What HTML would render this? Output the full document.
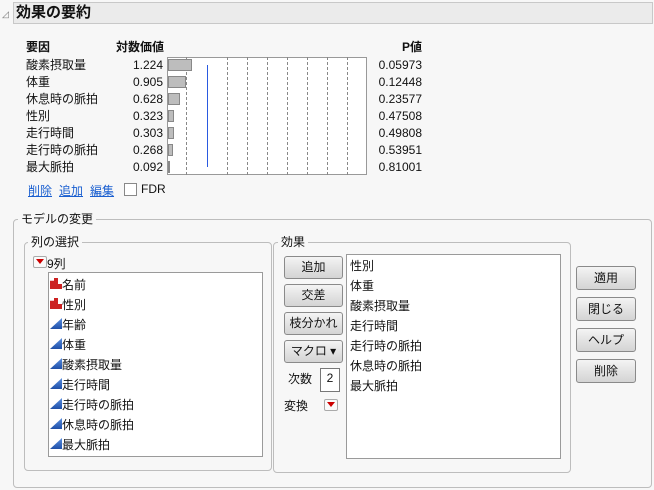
<!DOCTYPE html>
<html><head><meta charset="utf-8"><style>
body{margin:0;width:654px;height:490px;background:#f7f7f7;font-family:"Liberation Sans","Noto Sans CJK JP",sans-serif;font-size:12px;color:#111;position:relative;overflow:hidden}
.a{position:absolute;white-space:nowrap}
.r{text-align:right}
.btn{position:absolute;border:1px solid #8a8a8a;border-radius:3px;background:linear-gradient(#f4f4f4,#e0e0e0 60%,#d4d4d4);text-align:center;font-size:12px;box-sizing:border-box}
.grp{position:absolute;border:1px solid #bdbdbd;border-radius:4px}
.lbl{position:absolute;background:#f7f7f7;padding:0 3px;line-height:14px}
.list{position:absolute;background:#fff;border:1px solid #9a9a9a}
.dash{position:absolute;top:57px;height:118px;border-left:1px dashed #888}
.bar{position:absolute;left:168px;height:12px;background:#bdbdbd;border:1px solid #888;box-sizing:border-box}
.tri{position:absolute;width:12px;height:10px;border:1px solid #aaa;border-radius:2px;background:#fafafa}
.tri:after{content:"";position:absolute;left:2px;top:2px;border-left:4px solid transparent;border-right:4px solid transparent;border-top:5px solid #c00}
.n{display:inline-block;width:12px;height:11px;background:#c22;clip-path:polygon(0 25%,4px 25%,4px 0,8px 0,8px 55%,100% 55%,100% 100%,0 100%)}
.c{display:inline-block;width:12px;height:11px;background:linear-gradient(#5a8fe0,#1f4fa8);clip-path:polygon(100% 0,100% 100%,0 100%)}
</style></head><body>
<div class="a" style="left:2px;top:9px;font-size:9px;color:#777">◿</div>
<div class="a" style="left:13px;top:2px;width:640px;height:22px;background:#ebebeb;border:1px solid #c8c8c8;box-sizing:border-box"></div>
<div class="a" style="left:16px;top:4px;font-size:15px;font-weight:bold;line-height:18px">効果の要約</div>

<div class="a" style="left:26px;top:38px;font-weight:bold">要因</div>
<div class="a" style="left:116px;top:38px;font-weight:bold">対数価値</div>
<div class="a r" style="left:380px;width:42px;top:38px;font-weight:bold">P値</div>

<div class="a" style="left:167px;top:57px;width:200px;height:118px;border:1px solid #999;box-sizing:border-box;background:#fff"></div>
<div class="dash" style="left:186px"></div><div class="dash" style="left:227px"></div><div class="dash" style="left:247px"></div><div class="dash" style="left:267px"></div><div class="dash" style="left:287px"></div><div class="dash" style="left:307px"></div><div class="dash" style="left:327px"></div><div class="dash" style="left:347px"></div>
<div class="a" style="left:207px;top:65px;width:1px;height:102px;background:#2a5ae0"></div>
<div class="bar" style="top:59px;width:24px"></div>
<div class="bar" style="top:76px;width:18px"></div>
<div class="bar" style="top:93px;width:12px"></div>
<div class="bar" style="top:110px;width:6px"></div>
<div class="bar" style="top:127px;width:6px"></div>
<div class="bar" style="top:144px;width:5px"></div>
<div class="bar" style="top:161px;width:2px"></div>

<div style="position:absolute;left:26px;top:57px;line-height:17px">酸素摂取量<br>体重<br>休息時の脈拍<br>性別<br>走行時間<br>走行時の脈拍<br>最大脈拍</div>
<div class="r" style="position:absolute;left:100px;width:63px;top:57px;line-height:17px">1.224<br>0.905<br>0.628<br>0.323<br>0.303<br>0.268<br>0.092</div>
<div class="r" style="position:absolute;left:360px;width:62px;top:57px;line-height:17px">0.05973<br>0.12448<br>0.23577<br>0.47508<br>0.49808<br>0.53951<br>0.81001</div>

<div class="a" style="left:28px;top:182px;color:#1a5fd0;text-decoration:underline">削除</div>
<div class="a" style="left:59px;top:182px;color:#1a5fd0;text-decoration:underline">追加</div>
<div class="a" style="left:90px;top:182px;color:#1a5fd0;text-decoration:underline">編集</div>
<div class="a" style="left:124px;top:183px;width:11px;height:11px;border:1px solid #888;background:#fff"></div>
<div class="a" style="left:141px;top:182px">FDR</div>

<div class="grp" style="left:13px;top:219px;width:637px;height:267px"></div>
<div class="lbl" style="left:18px;top:212px">モデルの変更</div>
<div class="grp" style="left:24px;top:242px;width:246px;height:227px"></div>
<div class="lbl" style="left:28px;top:235px">列の選択</div>
<div class="tri" style="left:33px;top:256px"></div>
<div class="a" style="left:47px;top:255px">9列</div>
<div class="list" style="left:48px;top:272px;width:213px;height:183px"></div>
<div style="position:absolute;left:50px;top:275px;line-height:20px">
<div><span class="n"></span>名前</div>
<div><span class="n"></span>性別</div>
<div><span class="c"></span>年齢</div>
<div><span class="c"></span>体重</div>
<div><span class="c"></span>酸素摂取量</div>
<div><span class="c"></span>走行時間</div>
<div><span class="c"></span>走行時の脈拍</div>
<div><span class="c"></span>休息時の脈拍</div>
<div><span class="c"></span>最大脈拍</div>
</div>

<div class="grp" style="left:273px;top:242px;width:296px;height:229px"></div>
<div class="lbl" style="left:278px;top:235px">効果</div>
<div class="btn" style="left:284px;top:256px;width:59px;height:23px;line-height:21px">追加</div>
<div class="btn" style="left:284px;top:284px;width:59px;height:23px;line-height:21px">交差</div>
<div class="btn" style="left:284px;top:312px;width:59px;height:23px;line-height:21px">枝分かれ</div>
<div class="btn" style="left:284px;top:340px;width:59px;height:23px;line-height:21px">マクロ ▾</div>
<div class="a" style="left:288px;top:370px">次数</div>
<div class="a" style="left:320px;top:368px;width:20px;height:24px;background:#fff;border:1px solid #777;box-sizing:border-box;text-align:center;line-height:18px">2</div>
<div class="a" style="left:284px;top:397px">変換</div>
<div class="tri" style="left:324px;top:399px"></div>
<div class="list" style="left:346px;top:254px;width:213px;height:203px"></div>
<div style="position:absolute;left:350px;top:256px;line-height:20px">性別<br>体重<br>酸素摂取量<br>走行時間<br>走行時の脈拍<br>休息時の脈拍<br>最大脈拍</div>

<div class="btn" style="left:576px;top:266px;width:60px;height:24px;line-height:22px">適用</div>
<div class="btn" style="left:576px;top:297px;width:60px;height:24px;line-height:22px">閉じる</div>
<div class="btn" style="left:576px;top:328px;width:60px;height:24px;line-height:22px">ヘルプ</div>
<div class="btn" style="left:576px;top:359px;width:60px;height:24px;line-height:22px">削除</div>
</body></html>
